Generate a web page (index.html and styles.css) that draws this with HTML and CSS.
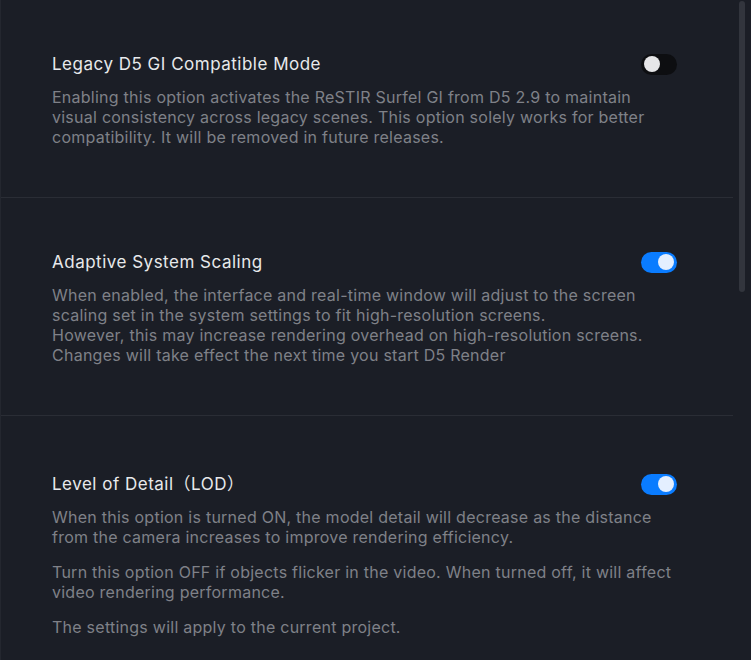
FILE: index.html
```html
<!DOCTYPE html>
<html lang="en">
<head>
    <meta charset="UTF-8">
    <meta name="viewport" content="width=device-width, initial-scale=1.0">
    <title>Settings</title>
    <link rel="stylesheet" href="styles.css">
</head>
<body>
    <div class="panel">
        <div class="list">
            <div class="item">
                <div class="head">
                    <div class="title">Legacy D5 GI Compatible Mode</div>
                    <div class="switch"><span class="knob"></span></div>
                </div>
                <div class="desc">
                    <p>Enabling this option activates the ReSTIR Surfel GI from D5 2.9 to maintain visual consistency across legacy scenes. This option solely works for better compatibility. It will be removed in future releases.</p>
                </div>
            </div><!-- item -->

            <div class="item">
                <div class="head">
                    <div class="title">Adaptive System Scaling</div>
                    <div class="switch on"><span class="knob"></span></div>
                </div>
                <div class="desc">
                    <p>When enabled, the interface and real-time window will adjust to the screen scaling set in the system settings to fit high-resolution screens.<br>However, this may increase rendering overhead on high-resolution screens.<br>Changes will take effect the next time you start D5 Render</p>
                </div>
            </div><!-- item -->

            <div class="item tall">
                <div class="head">
                    <div class="title">Level of Detail（LOD）</div>
                    <div class="switch on"><span class="knob"></span></div>
                </div>
                <div class="desc">
                    <p>When this option is turned ON, the model detail will decrease as the distance from the camera increases to improve rendering efficiency.</p>
                    <p>Turn this option OFF if objects flicker in the video. When turned off, it will affect video rendering performance.</p>
                    <p>The settings will apply to the current project.</p>
                </div>
            </div><!-- item -->
        </div><!-- list -->
        <div class="thumb"></div>
    </div><!-- panel -->
</body>
</html>
```

FILE: styles.css
```css
html, body{
    margin: 0;
    width: 100%;
    height: 100%;
    background: #1b1e26;
    overflow: hidden;
}
p{
    margin: 0;
}
.panel{
    position: relative;
    height: 100%;
    border-left: 1px solid #24272f;
    font-family: Inter, "Noto Sans CJK SC", sans-serif;
    font-size: 16px;
}
.list{
    width: 732px;
}
.item{
    padding: 52px 0 50px 51px;
    border-bottom: 1px solid #2a2d35;
}
.item.tall{
    padding-top: 56px;
}
.head{
    display: flex;
    align-items: center;
    justify-content: space-between;
    width: 625px;
    height: 24px;
}
.title{
    color: #e8e9eb;
    font-size: 17px;
    font-weight: 400;
    letter-spacing: 0.5px;
    line-height: 24px;
}
.desc{
    width: 625px;
    margin-top: 11px;
    color: #7f8188;
    line-height: 20px;
    letter-spacing: 0.25px;
    display: flex;
    flex-direction: column;
    gap: 15px;
}
.switch{
    width: 36px;
    height: 21px;
    border-radius: 11px;
    background: #0d0e11;
    display: flex;
    align-items: center;
    padding: 0 3px;
    box-sizing: border-box;
}
.switch .knob{
    width: 16px;
    height: 16px;
    border-radius: 50%;
    background: #e6e6e8;
}
.switch.on{
    background: #0a7cff;
    justify-content: flex-end;
}
.switch.on .knob{
    background: #e4efff;
}
/* overlay scrollbar */
.thumb{
    position: absolute;
    top: 1px;
    right: 6px;
    width: 6px;
    height: 291px;
    border-radius: 3px;
    background: #32353d;
}
```
